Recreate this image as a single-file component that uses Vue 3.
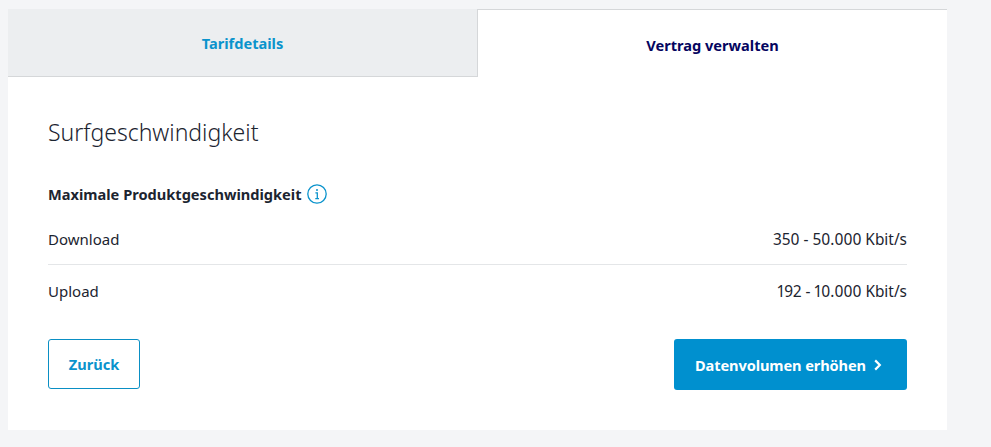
<template>
  <div class="page">
    <div class="card">
      <div class="tabs">
        <div class="tab inactive">Tarifdetails</div>
        <div class="tab active">Vertrag verwalten</div>
      </div>
      <div class="content">
        <h2 class="title">Surfgeschwindigkeit</h2>
        <div class="subtitle">
          <span>Maximale Produktgeschwindigkeit</span>
          <svg class="info" width="20" height="20" viewBox="0 0 20 20" fill="none">
            <circle cx="10" cy="10" r="9.2" stroke="#0a93cc" stroke-width="1.3" />
            <path d="M8.4 8.8H10.3V14.6M8.3 14.6H12" stroke="#0a93cc" stroke-width="1.3" />
            <circle cx="10" cy="5.9" r="1" fill="#0a93cc" />
          </svg>
        </div>
        <div class="rows">
          <div v-for="(row, i) in rows" :key="row.label" :class="['row', { divided: i > 0 }]">
            <span>{{ row.label }}</span>
            <span class="value">{{ row.value }}</span>
          </div>
        </div>
        <div class="buttons">
          <button class="btn-back">Zurück</button>
          <button class="btn-next">
            Datenvolumen erhöhen
            <svg width="8" height="12" viewBox="0 0 8 12" fill="none">
              <path d="M1.2 1.4L5.8 6L1.2 10.6" stroke="#ffffff" stroke-width="2.2" />
            </svg>
          </button>
        </div>
      </div>
    </div>
  </div>
</template>

<script setup>
const rows = [
  { label: 'Download', value: '350 - 50.000 Kbit/s' },
  { label: 'Upload', value: '192 - 10.000 Kbit/s' }
]
</script>

<style>
html, body {
  margin: 0;
  background: #f4f5f7;
}
</style>

<style scoped>
.page {
  box-sizing: border-box;
  width: 991px;
  height: 447px;
  padding: 9px 44px 17px 8px;
  background: #f4f5f7;
  font-family: "Noto Sans", sans-serif;
  color: #1c2430;
  overflow: hidden;
}

.card {
  height: 421px;
  background: #ffffff;
}

.tabs {
  display: flex;
  height: 68px;
}

.tab {
  box-sizing: border-box;
  display: flex;
  align-items: center;
  justify-content: center;
  font-size: 14.6px;
  font-weight: 700;
}

.tab.inactive {
  width: 470px;
  background: #eceef0;
  color: #0a93cc;
  border-bottom: 1px solid #d5d7d9;
  border-right: 1px solid #d5d7d9;
}

.tab.active {
  flex: 1;
  padding-top: 2px;
  color: #05055f;
  border-top: 1px solid #d5d7d9;
}

.content {
  padding: 40px 40px 0;
}

.title {
  margin: 0;
  font-size: 23px;
  line-height: 30px;
  font-weight: 300;
}

.subtitle {
  display: flex;
  align-items: center;
  gap: 5px;
  margin-top: 37px;
  font-size: 14.6px;
  font-weight: 700;
  line-height: 20px;
}

.rows {
  margin-top: 9px;
}

.row {
  display: flex;
  justify-content: space-between;
  height: 51px;
  align-items: center;
  font-size: 15px;
}

.row.divided {
  border-top: 1px solid #e4e6e8;
}

.value {
  margin-top: 2px;
  font-size: 15.4px;
  font-variant-numeric: proportional-nums;
}

.buttons {
  display: flex;
  justify-content: space-between;
  align-items: flex-start;
  margin-top: 23px;
}

button {
  font-family: inherit;
  font-size: 14.6px;
  font-weight: 700;
  border-radius: 3px;
  cursor: pointer;
}

.btn-back {
  width: 92px;
  height: 50px;
  background: #ffffff;
  border: 1px solid #0a8fc4;
  color: #0a93cc;
}

.btn-next {
  display: flex;
  align-items: center;
  gap: 8px;
  width: 233px;
  height: 51px;
  padding: 0 0 0 21px;
  background: #0090cf;
  border: none;
  color: #ffffff;
  letter-spacing: -0.1px;
}
</style>
